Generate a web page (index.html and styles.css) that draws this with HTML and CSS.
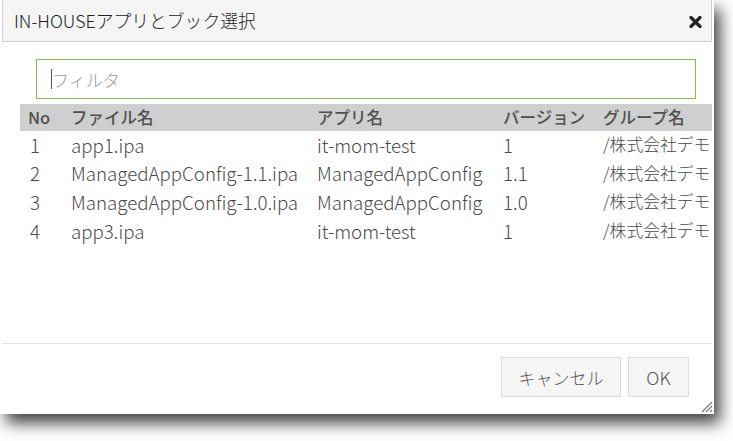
FILE: index.html
```html
<!DOCTYPE html>
<html lang="ja">
<head>
<meta charset="utf-8">
<title>IN-HOUSEアプリとブック選択</title>
<link rel="stylesheet" href="styles.css">
</head>
<body>
<div class="dialog">
  <div class="titlebar">
    <span class="title">IN-HOUSEアプリとブック選択</span>
    <button class="close" aria-label="close">
      <svg width="13" height="12" viewBox="0 0 13 12"><path d="M2 1.5 L11 10.5 M11 1.5 L2 10.5" stroke="#222" stroke-width="3.2" stroke-linecap="round"/></svg>
    </button>
  </div>
  <div class="content">
    <div class="filter">
      <input class="filter-input" type="text" placeholder="フィルタ">
      <span class="caret"></span>
    </div>
    <div class="table">
      <div class="row head">
        <div class="c1">No</div><div class="c2">ファイル名</div><div class="c3">アプリ名</div><div class="c4">バージョン</div><div class="c5">グループ名</div>
      </div>
      <div class="row">
        <div class="c1">1</div><div class="c2">app1.ipa</div><div class="c3">it-mom-test</div><div class="c4">1</div><div class="c5">/株式会社デモ</div>
      </div>
      <div class="row">
        <div class="c1">2</div><div class="c2">ManagedAppConfig-1.1.ipa</div><div class="c3">ManagedAppConfig</div><div class="c4">1.1</div><div class="c5">/株式会社デモ</div>
      </div>
      <div class="row">
        <div class="c1">3</div><div class="c2">ManagedAppConfig-1.0.ipa</div><div class="c3">ManagedAppConfig</div><div class="c4">1.0</div><div class="c5">/株式会社デモ</div>
      </div>
      <div class="row">
        <div class="c1">4</div><div class="c2">app3.ipa</div><div class="c3">it-mom-test</div><div class="c4">1</div><div class="c5">/株式会社デモ</div>
      </div>
    </div>
  </div>
  <div class="footer">
    <button class="btn btn-cancel">キャンセル</button>
    <button class="btn btn-ok">OK</button>
  </div>
  <svg class="resize" width="13" height="13" viewBox="0 0 13 13">
    <path d="M12 2 L2 12 M12 6 L6 12 M12 10 L10 12" stroke="#777" stroke-width="1.2"/>
  </svg>
</div>
</body>
</html>
```
FILE: styles.css
```css
html, body {
  margin: 0;
  padding: 0;
  background: #ffffff;
}
body {
  width: 733px;
  height: 441px;
  overflow: hidden;
  font-family: "Noto Sans CJK JP", "Noto Sans", sans-serif;
  color: #4a4a4a;
}
.dialog {
  position: relative;
  width: 714px;
  height: 414px;
  box-sizing: border-box;
  padding: 0 2px 2px 2px;
  background: #fff;
  display: flex;
  flex-direction: column;
  box-shadow: 6px 9px 15px rgba(0, 0, 0, 0.75);
}
.titlebar {
  height: 42px;
  box-sizing: border-box;
  background: #f5f5f5;
  border: 1px solid #cfcfcf;
  border-top: 0;
  display: flex;
  align-items: center;
  justify-content: space-between;
  padding: 0 9px 0 11px;
  flex: none;
}
.title {
  font-size: 17.8px;
  font-weight: 300;
  color: #222;
  margin-top: -1px;
}
.close {
  border: 0;
  background: transparent;
  padding: 0;
  width: 13px;
  height: 12px;
  display: flex;
  margin-top: 2px;
}
.content {
  flex: 1;
  overflow: hidden;
  padding: 17px 0 0 18px;
}
.filter {
  position: relative;
  margin-left: 16px;
  width: 660px;
  height: 40px;
  margin-bottom: 5px;
}
.filter-input {
  width: 100%;
  height: 100%;
  box-sizing: border-box;
  border: 1px solid #7cc63e;
  outline: none;
  padding: 0 0 0 15px;
  font-family: "Noto Sans CJK JP", "Noto Sans", sans-serif;
  font-size: 17px;
  font-weight: 300;
  color: #444;
  background: #fff;
}
.filter-input::placeholder {
  color: #9a9a9a;
}
.caret {
  position: absolute;
  left: 15px;
  top: 10px;
  width: 1px;
  height: 20px;
  background: #555;
}
.table {
  width: 760px;
  font-size: 18.7px;
  font-weight: 300;
}
.row {
  display: grid;
  grid-template-columns: 43px 246px 186px 100px 185px;
  height: 28.6px;
  align-items: center;
  white-space: nowrap;
}
.row > div {
  padding-left: 8px;
  overflow: hidden;
  margin-top: -2px;
}
.row .c1 {
  padding-left: 10px;
}
.row .c5 {
  font-size: 16.8px;
}
.row.head {
  height: 27px;
  background: #cfcfcf;
  color: #505050;
  font-size: 16.5px;
  font-weight: 500;
}
.row.head > div {
  margin-top: -2px;
  font-size: 16.5px;
}
.row.head .c1 {
  padding-left: 8px;
}
.footer {
  flex: none;
  height: 69px;
  box-sizing: border-box;
  border-top: 1px solid #e3e3e3;
  display: flex;
  justify-content: flex-end;
  align-items: flex-start;
  gap: 7px;
  padding: 13px 23px 0 0;
}
.btn {
  height: 40px;
  box-sizing: border-box;
  border: 1px solid #dcdcdc;
  background: #f6f6f6;
  color: #555;
  font-family: "Noto Sans CJK JP", "Noto Sans", sans-serif;
  font-size: 17px;
  font-weight: 300;
  padding: 0;
}
.btn-cancel {
  width: 120px;
}
.btn-ok {
  width: 61px;
  font-size: 18px;
}
.resize {
  position: absolute;
  right: 1px;
  bottom: 1px;
}
```
